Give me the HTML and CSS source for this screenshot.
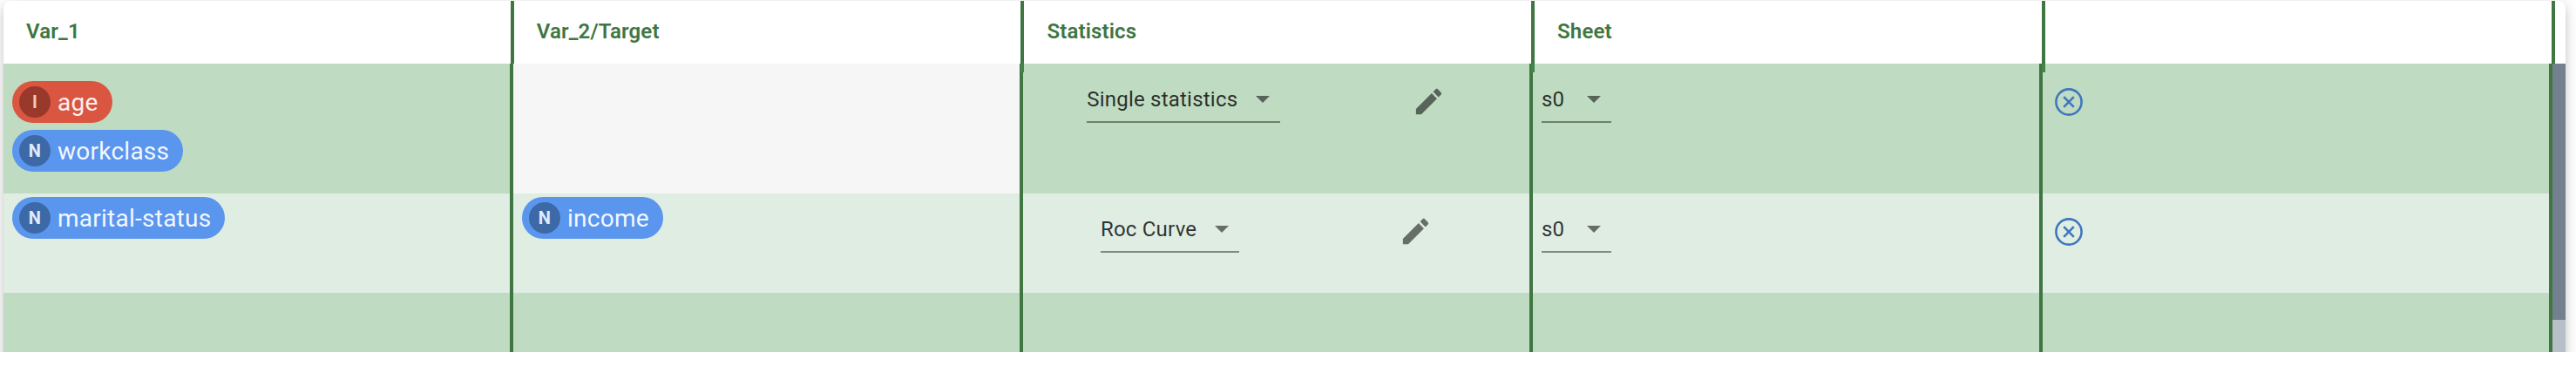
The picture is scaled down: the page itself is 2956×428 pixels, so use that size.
FILE: index.html
```html
<!DOCTYPE html>
<html lang="en">

<head>
    <meta charset="UTF-8" />
    <title>Statistics</title>
    <link rel="stylesheet" href="styles.css">
</head>

<body>
    <div class="wrapper">
        <div class="table">
            <div class="header">
                <div class="th">Var_1</div>
                <div class="th">Var_2/Target</div>
                <div class="th">Statistics</div>
                <div class="th">Sheet</div>
                <div class="th"></div>
            </div>
            <div class="content">
                <div class="rows">
                    <div class="row first">
                        <div class="cell vars">
                            <div class="chip integer"><span class="avatar">I</span>age</div>
                            <div class="chip"><span class="avatar">N</span>workclass</div>
                        </div>
                        <div class="cell disabled"></div>
                        <div class="cell stats">
                            <div class="select">Single statistics<span class="arrow"></span></div>
                            <div class="edit">
                                <svg viewBox="0 0 24 24"><path d="M3 17.25V21h3.75L17.81 9.94l-3.75-3.75L3 17.25zM20.71 7.04c.39-.39.39-1.02 0-1.41l-2.34-2.34c-.39-.39-1.02-.39-1.41 0l-1.83 1.83 3.75 3.75 1.83-1.83z"/></svg>
                            </div>
                        </div>
                        <div class="cell sheet">
                            <div class="select small">s0<span class="arrow"></span></div>
                        </div>
                        <div class="cell remove">
                            <svg viewBox="0 0 32 32"><circle cx="16" cy="16" r="14.6"/><path d="M10.2 10.2l11.6 11.6M21.8 10.2L10.2 21.8"/></svg>
                        </div>
                    </div>
                    <div class="row second">
                        <div class="cell vars">
                            <div class="chip"><span class="avatar">N</span>marital-status</div>
                        </div>
                        <div class="cell vars">
                            <div class="chip"><span class="avatar">N</span>income</div>
                        </div>
                        <div class="cell stats">
                            <div class="select">Roc Curve<span class="arrow"></span></div>
                            <div class="edit">
                                <svg viewBox="0 0 24 24"><path d="M3 17.25V21h3.75L17.81 9.94l-3.75-3.75L3 17.25zM20.71 7.04c.39-.39.39-1.02 0-1.41l-2.34-2.34c-.39-.39-1.02-.39-1.41 0l-1.83 1.83 3.75 3.75 1.83-1.83z"/></svg>
                            </div>
                        </div>
                        <div class="cell sheet">
                            <div class="select small">s0<span class="arrow"></span></div>
                        </div>
                        <div class="cell remove">
                            <svg viewBox="0 0 32 32"><circle cx="16" cy="16" r="14.6"/><path d="M10.2 10.2l11.6 11.6M21.8 10.2L10.2 21.8"/></svg>
                        </div>
                    </div>
                    <div class="row third">
                        <div class="cell"></div>
                        <div class="cell"></div>
                        <div class="cell"></div>
                        <div class="cell"></div>
                        <div class="cell"></div>
                    </div>
                </div>
                <div class="scrollbar">
                    <div class="thumb"></div>
                </div>
            </div>
        </div>
    </div>
</body>

</html>
```
FILE: styles.css
```css
body {
    margin: 0;
    background: #fff;
    font-family: Roboto, "Liberation Sans", sans-serif;
    color: rgba(0, 0, 0, 0.8);
}
.wrapper {
    box-sizing: border-box;
    height: 404px;
    padding: 1px 12px 0 4px;
    overflow: hidden;
}
.table {
    height: 440px;
    border-radius: 8px;
    background: #fff;
    box-shadow: 0 6px 10px rgba(0, 0, 0, 0.14), 0 2px 20px rgba(0, 0, 0, 0.12);
}
.header {
    display: flex;
    height: 72px;
}
.th {
    box-sizing: border-box;
    position: relative;
    width: 585.7px;
    padding: 19px 26px;
    border-right: 4px solid #3f7642;
    color: #3f7642;
    font-size: 24px;
    font-weight: 600;
    line-height: 32px;
    letter-spacing: 0.15px;
}
/* separators run a little into the first row */
.th:nth-child(n+2):nth-child(-n+4)::after {
    content: "";
    position: absolute;
    top: 72px;
    right: -4px;
    width: 4px;
    height: 10px;
    background: #43834c;
}
.content {
    display: flex;
}
.rows {
    width: 2925px;
}
.row {
    display: flex;
    background: #bfdbc2;
}
.first {
    height: 149px;
}
.second {
    height: 114px;
    background: #e0ede3;
}
.third {
    height: 104px;
}
.cell {
    box-sizing: border-box;
    width: 585px;
    border-right: 4px solid #3f7642;
}
.disabled {
    background: #f6f6f6;
}
.vars {
    display: flex;
    flex-direction: column;
    align-items: flex-start;
    gap: 8px;
    padding: 4px 10px;
}
.first .vars {
    padding-top: 20px;
}
.chip {
    box-sizing: border-box;
    display: flex;
    align-items: center;
    height: 48px;
    padding: 0 16px 0 8px;
    border-radius: 24px;
    background: #5a95ee;
    color: #f2f8ff;
    font-size: 28px;
    letter-spacing: 0.25px;
}
.avatar {
    display: flex;
    align-items: center;
    justify-content: center;
    width: 36px;
    height: 36px;
    margin-right: 8px;
    border-radius: 50%;
    background: #3e69a7;
    color: #e2ebfb;
    font-size: 20px;
    font-weight: 700;
}
.integer {
    background: #da5641;
    color: #fdf0ee;
}
.integer .avatar {
    background: #98392b;
    color: #eec9c4;
}
.stats {
    display: flex;
    justify-content: space-around;
    align-items: flex-start;
    padding: 20px 18px 0 0;
}
.select {
    display: flex;
    align-items: center;
    justify-content: space-between;
    box-sizing: border-box;
    height: 48px;
    padding: 0 12px 4px 0;
    border-bottom: 2px solid rgba(0, 0, 0, 0.42);
    font-size: 24px;
    letter-spacing: 0.22px;
}
.arrow {
    width: 0;
    margin: 0 0 0 21px;
    border: 8px solid transparent;
    border-top-color: rgba(0, 0, 0, 0.54);
    border-bottom: 0;
}
.edit {
    display: flex;
    align-items: center;
    justify-content: center;
    width: 48px;
    height: 46px;
}
.edit svg {
    width: 39px;
    height: 39px;
    fill: rgba(0, 0, 0, 0.54);
}
.sheet {
    padding: 20px 10px 0;
}
.small {
    width: 80px;
}
.remove {
    padding: 28px 14px 0;
}
.remove svg {
    display: block;
    width: 32px;
    height: 32px;
    fill: none;
    stroke: #4076bd;
    stroke-width: 2.6;
}
.scrollbar {
    width: 15px;
    background: #b9bfc9;
}
.thumb {
    height: 294px;
    background: #74808f;
}
```
